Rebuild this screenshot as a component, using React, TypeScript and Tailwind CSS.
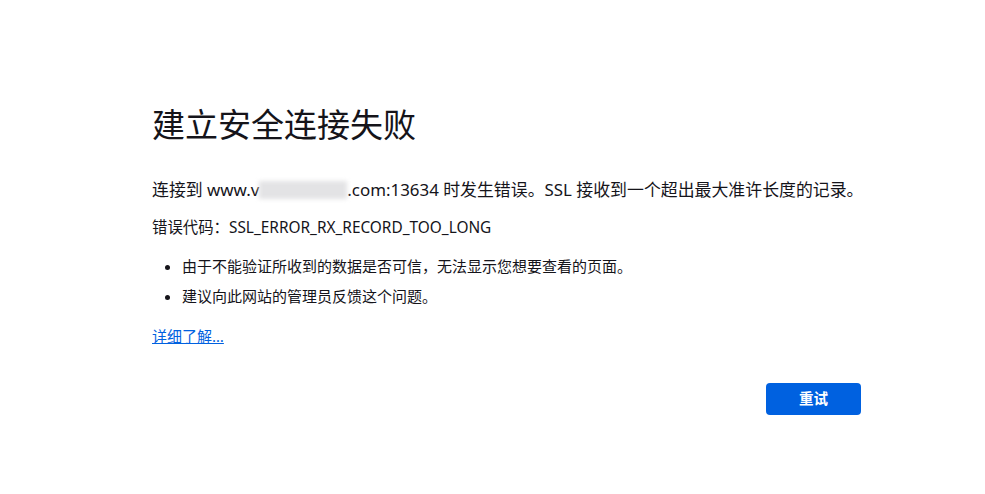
export default function App() {
  return (
    <div className="min-h-[494px] w-full bg-white text-[#15141a] [font-family:'Noto_Sans','Noto_Sans_CJK_SC',sans-serif]">
      <div className="ml-[152px] w-[709px] pt-[100px]">
        <h1 className="text-[33px] leading-[50px] font-normal">建立安全连接失败</h1>

        <p className="mt-[27px] whitespace-nowrap text-[16.9px] leading-[26px]">
          连接到 www.v
          <span className="inline-block h-[18px] w-[88px] translate-y-[3px] bg-[#e3e3e5] blur-[2px]"></span>
          .com:13634 时发生错误。SSL 接收到一个超出最大准许长度的记录。
        </p>

        <p className="mt-[13px] text-[15.4px] leading-[24px]">错误代码：SSL_ERROR_RX_RECORD_TOO_LONG</p>

        <ul className="mt-[16px] list-disc pl-[30px] text-[15px] leading-[20px]">
          <li className="mb-[10px]">由于不能验证所收到的数据是否可信，无法显示您想要查看的页面。</li>
          <li>建议向此网站的管理员反馈这个问题。</li>
        </ul>

        <a href="#" className="mt-[20px] inline-block text-[15px] leading-[20px] text-[#0061e0] underline">
          详细了解…
        </a>

        <div className="mt-[35px] flex justify-end">
          <button className="h-[32px] w-[95px] rounded-[4px] bg-[#0061e0] text-[14.5px] font-bold text-white">
            重试
          </button>
        </div>
      </div>
    </div>
  );
}
